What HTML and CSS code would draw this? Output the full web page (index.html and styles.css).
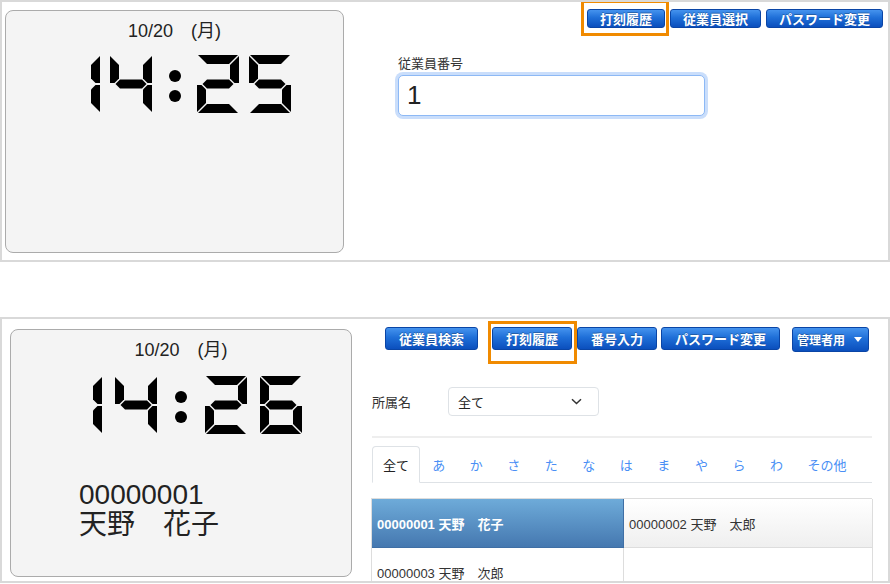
FILE: index.html
```html
<!DOCTYPE html>
<html lang="ja">
<head>
<meta charset="utf-8">
<title>打刻</title>
<link rel="stylesheet" href="styles.css">
</head>
<body>
<section class="frame frame-top">
  <div class="clock clock-top">
    <div class="date">10/20　(月)</div>
    <div class="seg-time gap-top" role="img" aria-label="14:25">
      <div class="dg"><i class="s b"></i><i class="s c"></i></div>
      <div class="dg"><i class="s b"></i><i class="s c"></i><i class="s f"></i><i class="s g"></i></div>
      <div class="colon colon-top"></div>
      <div class="dg"><i class="s a"></i><i class="s b"></i><i class="s d"></i><i class="s e"></i><i class="s g"></i></div>
      <div class="dg"><i class="s a"></i><i class="s c"></i><i class="s d"></i><i class="s f"></i><i class="s g"></i></div>
    </div>
  </div>
  <div class="side side-top">
    <div class="btns btns-top">
      <button class="btn">打刻履歴</button>
      <button class="btn">従業員選択</button>
      <button class="btn">パスワード変更</button>
    </div>
    <div class="field">
      <label class="field-label" for="num">従業員番号</label>
      <input id="num" class="num" type="text" value="1">
    </div>
  </div>
  <div class="hl hl-top"></div>
</section>

<section class="frame frame-bot">
  <div class="clock clock-bot">
    <div class="date">10/20　(月)</div>
    <div class="seg-time gap-bot" role="img" aria-label="14:26">
      <div class="dg"><i class="s b"></i><i class="s c"></i></div>
      <div class="dg"><i class="s b"></i><i class="s c"></i><i class="s f"></i><i class="s g"></i></div>
      <div class="colon colon-bot"></div>
      <div class="dg"><i class="s a"></i><i class="s b"></i><i class="s d"></i><i class="s e"></i><i class="s g"></i></div>
      <div class="dg"><i class="s a"></i><i class="s c"></i><i class="s d"></i><i class="s e"></i><i class="s f"></i><i class="s g"></i></div>
    </div>
    <div class="who">
      <div>00000001</div>
      <div>天野　花子</div>
    </div>
  </div>
  <div class="side side-bot">
    <div class="btns btns-bot">
      <button class="btn btn-lg b-search">従業員検索</button>
      <button class="btn btn-lg b-hist">打刻履歴</button>
      <button class="btn btn-lg b-num">番号入力</button>
      <button class="btn btn-lg b-pass">パスワード変更</button>
      <button class="btn btn-lg b-admin">管理者用<span class="caret"></span></button>
    </div>
    <div class="filter">
      <span class="filter-label">所属名</span>
      <div class="select">
        <span>全て</span>
        <svg class="chev" width="11" height="7" viewBox="0 0 11 7"><path d="M1 1.2l4.5 4.3 4.5-4.3" fill="none" stroke="#333" stroke-width="1.5"/></svg>
      </div>
    </div>
    <div class="sep"></div>
    <div class="tabs">
      <span class="tab active">全て</span>
      <span class="tab">あ</span>
      <span class="tab">か</span>
      <span class="tab">さ</span>
      <span class="tab">た</span>
      <span class="tab">な</span>
      <span class="tab">は</span>
      <span class="tab">ま</span>
      <span class="tab">や</span>
      <span class="tab">ら</span>
      <span class="tab">わ</span>
      <span class="tab">その他</span>
    </div>
    <div class="grid">
      <div class="cell sel">00000001 天野　花子</div>
      <div class="cell shade">00000002 天野　太郎</div>
      <div class="cell">00000003 天野　次郎</div>
      <div class="cell"></div>
    </div>
  </div>
  <div class="hl hl-bot"></div>
</section>
</body>
</html>
```

FILE: styles.css
```css
* { box-sizing: border-box; }

body {
  margin: 0;
  background: #fff;
  font-family: "Liberation Sans", "Noto Sans CJK JP", sans-serif;
  color: #222;
}

.frame {
  position: relative;
  width: 890px;
  border: 2px solid #d9d9d9;
  display: flex;
  align-items: flex-start;
  overflow: hidden;
}
.frame-top { height: 262px; }
.frame-bot { height: 266px; margin-top: 55px; }

/* clock panel */
.clock {
  flex: none;
  background: #f4f4f4;
  border: 1px solid #ababab;
  border-radius: 8px;
  padding-top: 10px;
}
.clock-top { width: 339px; height: 243px; margin: 8px 0 0 3px; }
.clock-bot { width: 342px; height: 248px; margin: 10px 0 0 8px; }

.date {
  text-align: center;
  font-size: 18px;
  line-height: 21px;
  color: #222;
}

.seg-time {
  display: flex;
  justify-content: center;
}
.gap-top { margin-top: 13px; }
.gap-bot { margin-top: 15px; }
.gap-top .dg + .dg { margin-left: 10px; }
.gap-bot .dg + .dg { margin-left: 13px; }

.dg { position: relative; width: 42px; height: 58px; flex: none; }
.s { position: absolute; inset: 0; background: #000; }
.s.a { clip-path: polygon(1px 0, 41px 0, 32px 9px, 10px 9px); }
.s.b { clip-path: polygon(42px 1px, 42px 28px, 37.5px 28px, 33px 23.5px, 33px 10px); }
.s.c { clip-path: polygon(42px 30px, 42px 57px, 33px 48px, 33px 34.5px, 37.5px 30px); }
.s.d { clip-path: polygon(1px 58px, 10px 49px, 32px 49px, 41px 58px); }
.s.e { clip-path: polygon(0 30px, 4.5px 30px, 9px 34.5px, 9px 48px, 0 57px); }
.s.f { clip-path: polygon(0 1px, 9px 10px, 9px 23.5px, 4.5px 28px, 0 28px); }
.s.g { clip-path: polygon(5.5px 29px, 10px 24.5px, 32px 24.5px, 36.5px 29px, 32px 33.5px, 10px 33.5px); }

.colon { position: relative; height: 58px; flex: none; }
.colon-top { width: 45px; }
.colon-bot { width: 48px; }
.colon::before, .colon::after {
  content: "";
  position: absolute;
  left: 50%;
  width: 12px;
  height: 12px;
  margin-left: -6px;
  border-radius: 50%;
  background: #000;
}
.colon::before { top: 15px; }
.colon::after { top: 35px; }

.who {
  margin: 46px 0 0 68px;
  font-size: 28px;
  line-height: 30px;
  color: #222;
}

/* right side */
.side { flex: 1; min-width: 0; display: flex; flex-direction: column; }
.side-top { padding-right: 5px; }
.side-bot { padding: 0 16px 0 20px; }

.btns { display: flex; }
.btns-top { justify-content: flex-end; gap: 5px; margin-top: 7px; }
.btns-bot { margin-top: 8px; align-items: flex-start; }

.btn {
  font-family: "Noto Sans CJK JP", sans-serif;
  font-weight: 700;
  font-size: 13px;
  color: #fff;
  background: linear-gradient(#4593ee 0%, #1f6fd8 45%, #0b4fbd 100%);
  border: 1px solid #0a45a6;
  border-radius: 3px;
  height: 19px;
  line-height: 17px;
  padding: 0 12px;
  white-space: nowrap;
  text-shadow: 0 -1px 0 rgba(0, 0, 0, 0.25);
  display: flex;
  align-items: center;
}
.btn-lg { height: 23px; line-height: 21px; padding: 0 13px; }
.b-search { margin-left: 13px; }
.b-hist { margin-left: 14px; }
.b-num { margin-left: 5px; }
.b-pass { margin-left: 4px; }
.b-admin { margin-left: 12px; height: 25px; padding: 0 6px 0 4px; font-size: 12px; }
.caret {
  width: 0;
  height: 0;
  margin-left: 9px;
  border-left: 4px solid transparent;
  border-right: 4px solid transparent;
  border-top: 5px solid #fff;
}

.field { margin: 27px 0 0 54px; display: flex; flex-direction: column; align-items: flex-start; }
.field-label {
  font-family: "Noto Sans CJK JP", sans-serif;
  font-size: 13px;
  line-height: 16px;
  color: #333;
}
.num {
  margin-top: 4px;
  width: 307px;
  height: 41px;
  border: 1px solid #8db9f5;
  border-radius: 5px;
  box-shadow: 0 0 0 3px #cadefb;
  padding: 0 8px;
  font-family: "Liberation Sans", sans-serif;
  font-size: 26px;
  color: #222;
  background: #fff;
  outline: none;
}

.filter { display: flex; align-items: center; margin-top: 35px; }
.filter-label {
  width: 76px;
  font-family: "Noto Sans CJK JP", sans-serif;
  font-size: 13px;
  color: #333;
}
.select {
  width: 151px;
  height: 29px;
  border: 1px solid #dee2e6;
  border-radius: 4px;
  display: flex;
  align-items: center;
  justify-content: space-between;
  padding: 0 16px 0 9px;
  font-family: "Noto Sans CJK JP", sans-serif;
  font-size: 13px;
  color: #222;
  background: #fff;
}

.sep { margin-top: 20px; border-top: 2px solid #eeeeee; }

.tabs {
  display: flex;
  margin-top: 8px;
  border-bottom: 1px solid #dee2e6;
}
.tab {
  flex: none;
  white-space: nowrap;
  height: 37px;
  margin-bottom: -1px;
  display: flex;
  align-items: center;
  padding: 0 11.25px;
  border: 1px solid transparent;
  border-radius: 4px 4px 0 0;
  font-family: "Noto Sans CJK JP", sans-serif;
  font-size: 13px;
  color: #4a8ff5;
}
.tab.active {
  padding: 0 10px;
  color: #222;
  background: #fff;
  border-color: #dee2e6 #dee2e6 #fff;
}

.grid {
  margin-top: 15px;
  display: grid;
  grid-template-columns: 252px 249px;
  border-top: 1px solid #dddddd;
  border-left: 1px solid #dddddd;
  margin-left: -1px;
}
.cell {
  height: 49px;
  display: flex;
  align-items: center;
  padding-left: 5px;
  border-right: 1px solid #dddddd;
  border-bottom: 1px solid #dddddd;
  font-family: "Liberation Sans", "Noto Sans CJK JP", sans-serif;
  font-size: 13px;
  color: #333;
  background: #fff;
  white-space: nowrap;
}
.cell.sel {
  color: #fff;
  font-weight: 700;
  background: linear-gradient(#6eabd9, #4578b0);
  border-color: #3f6fa5;
}
.cell.shade { background: linear-gradient(#ffffff, #efefef); }

/* orange annotation boxes */
.hl { position: absolute; border: 3px solid #f08a00; pointer-events: none; }
.hl-top { left: 579px; top: -2px; width: 88px; height: 36px; }
.hl-bot { left: 486px; top: 2px; width: 89px; height: 43px; }
```
